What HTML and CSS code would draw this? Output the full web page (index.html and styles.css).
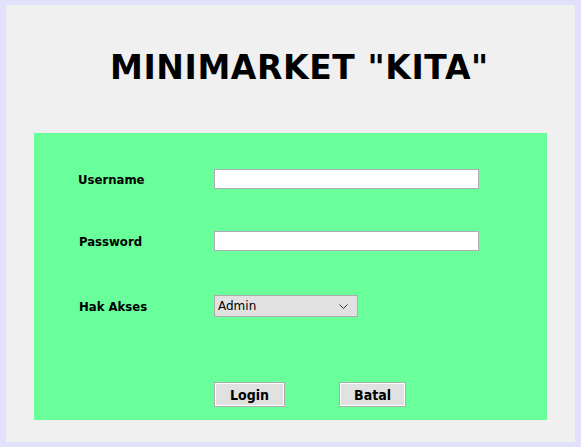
FILE: index.html
```html
<!DOCTYPE html>
<html>
<head>
<meta charset="utf-8">
<link rel="stylesheet" href="styles.css">
</head>
<body>
<div class="frame">
  <div class="window">
    <h1 class="title">MINIMARKET "KITA"</h1>
    <div class="panel">
      <div class="row row-user">
        <label class="label">Username</label>
        <input class="field" type="text">
      </div>
      <div class="row row-pass">
        <label class="label">Password</label>
        <input class="field" type="password">
      </div>
      <div class="row row-akses">
        <label class="label">Hak Akses</label>
        <div class="select">
          <span>Admin</span>
          <svg class="chev" width="9" height="5" viewBox="0 0 9 5"><path d="M0.5 0.5 L4.5 4.5 L8.5 0.5" fill="none" stroke="#333" stroke-width="1"/></svg>
        </div>
      </div>
      <div class="buttons">
        <button class="btn btn-login">Login</button>
        <button class="btn btn-batal">Batal</button>
      </div>
    </div>
  </div>
</div>
</body>
</html>
```

FILE: styles.css
```css
html, body {
  margin: 0;
  padding: 0;
  background: #e1e1fb;
}
.frame {
  width: 581px;
  height: 447px;
  padding: 5px 6px;
  box-sizing: border-box;
}
.window {
  background: #f0f0f0;
  height: 437px;
  padding-top: 1px;
  box-sizing: border-box;
  font-family: "DejaVu Sans", Verdana, sans-serif;
}
.title {
  margin: 43px 0 0 104px;
  font-size: 33px;
  line-height: 38px;
  letter-spacing: 0.6px;
  font-weight: bold;
  color: #000;
  white-space: nowrap;
}
.panel {
  margin: 46px 0 0 28px;
  width: 513px;
  height: 287px;
  background: #69ff9b;
  padding-top: 36px;
  box-sizing: border-box;
  display: flex;
  flex-direction: column;
}
.row {
  display: flex;
  align-items: center;
}
.label {
  width: 136px;
  padding-left: 44px;
  font-family: "DejaVu Sans Condensed", "DejaVu Sans", sans-serif;
  font-stretch: condensed;
  font-size: 13px;
  font-weight: bold;
  color: #000;
}
.row-pass { margin-top: 42px; }
.row-pass .label, .row-akses .label { padding-left: 45px; width: 135px; }
.row-akses { margin-top: 44px; }
.field {
  margin: 0;
  width: 265px;
  height: 20px;
  box-sizing: border-box;
  border: 1px solid #abadb3;
  background: #fff;
  padding: 0;
}
.select {
  width: 144px;
  height: 22px;
  box-sizing: border-box;
  border: 1px solid #adadad;
  background: #e1e1e1;
  display: flex;
  align-items: center;
  justify-content: space-between;
  padding: 0 9px 0 3px;
  font-size: 12px;
  color: #000;
}
.chev { display: block; }
.buttons {
  margin-top: 65px;
  padding-left: 180px;
  display: flex;
  gap: 54px;
}
.btn {
  margin: 0;
  height: 25px;
  box-sizing: border-box;
  border: 1px solid #adadad;
  outline: 1px solid #fff;
  outline-offset: -2px;
  background: #e1e1e1;
  font-family: "DejaVu Sans Condensed", "DejaVu Sans", sans-serif;
  font-stretch: condensed;
  font-size: 14px;
  font-weight: bold;
  color: #000;
  padding: 0;
}
.btn-login { width: 71px; }
.btn-batal { width: 67px; }
```
